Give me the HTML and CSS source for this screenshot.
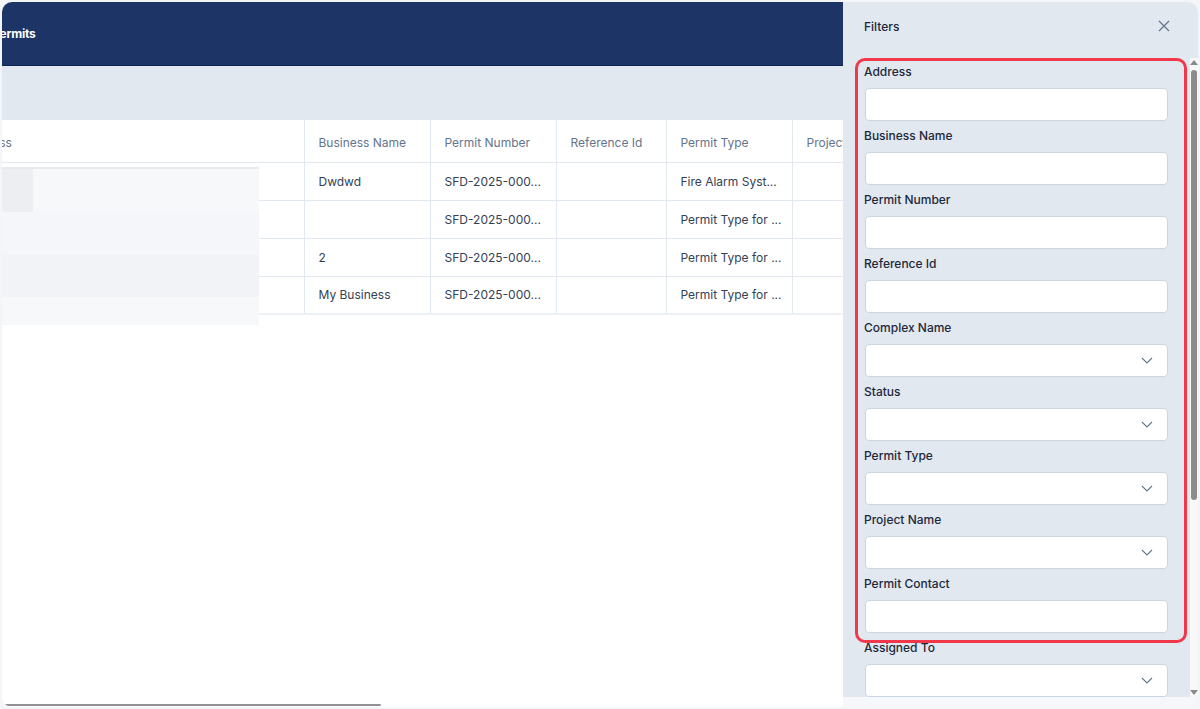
FILE: index.html
```html
<!DOCTYPE html>
<html lang="en">
<head>
    <meta charset="UTF-8">
    <meta name="viewport" content="width=device-width, initial-scale=1.0">
    <title>Permits</title>
    <link rel="stylesheet" href="styles.css">
</head>
<body>
    <div class="frame">
        <div class="main">
            <div class="main-scroll">
                <div class="topbar">
                    <span class="page-title">Permits</span>
                </div>
                <div class="toolbar"></div>
                <table class="permits">
                    <colgroup>
                        <col style="width:353px">
                        <col style="width:126px">
                        <col style="width:126px">
                        <col style="width:110px">
                        <col style="width:126px">
                        <col style="width:160px">
                    </colgroup>
                    <thead>
                        <tr>
                            <th>Address</th>
                            <th>Business Name</th>
                            <th>Permit Number</th>
                            <th>Reference Id</th>
                            <th>Permit Type</th>
                            <th>Project Name</th>
                        </tr>
                    </thead>
                    <tbody>
                        <tr>
                            <td></td>
                            <td>Dwdwd</td>
                            <td>SFD-2025-000...</td>
                            <td></td>
                            <td>Fire Alarm Syst...</td>
                            <td></td>
                        </tr>
                        <tr>
                            <td></td>
                            <td></td>
                            <td>SFD-2025-000...</td>
                            <td></td>
                            <td>Permit Type for ...</td>
                            <td></td>
                        </tr>
                        <tr>
                            <td></td>
                            <td>2</td>
                            <td>SFD-2025-000...</td>
                            <td></td>
                            <td>Permit Type for ...</td>
                            <td></td>
                        </tr>
                        <tr>
                            <td></td>
                            <td>My Business</td>
                            <td>SFD-2025-000...</td>
                            <td></td>
                            <td>Permit Type for ...</td>
                            <td></td>
                        </tr>
                    </tbody>
                </table>
            </div>
            <!-- redacted address column -->
            <div class="redact">
                <div class="redact-row r1"><span class="r1-edge"></span></div>
                <div class="redact-row r2"></div>
                <div class="redact-row r3"></div>
                <div class="redact-row r4"></div>
            </div>
            <div class="hscroll"><div class="hscroll-thumb"></div></div>
        </div>

        <aside class="filters">
            <div class="filters-head">
                <span class="filters-title">Filters</span>
                <svg class="close" width="12" height="12" viewBox="0 0 12 12">
                    <path d="M1 1 L11 11 M11 1 L1 11" stroke="#64748b" stroke-width="1.2" fill="none"/>
                </svg>
            </div>
            <div class="filters-body">
                <div class="filters-list">
                    <div class="field">
                        <label>Address</label>
                        <div class="input"></div>
                    </div>
                    <div class="field">
                        <label>Business Name</label>
                        <div class="input"></div>
                    </div>
                    <div class="field">
                        <label>Permit Number</label>
                        <div class="input"></div>
                    </div>
                    <div class="field">
                        <label>Reference Id</label>
                        <div class="input"></div>
                    </div>
                    <div class="field">
                        <label>Complex Name</label>
                        <div class="input select"><svg width="12" height="7" viewBox="0 0 12 7"><path d="M1 1 L6 6 L11 1" stroke="#64748b" stroke-width="1.1" fill="none"/></svg></div>
                    </div>
                    <div class="field">
                        <label>Status</label>
                        <div class="input select"><svg width="12" height="7" viewBox="0 0 12 7"><path d="M1 1 L6 6 L11 1" stroke="#64748b" stroke-width="1.1" fill="none"/></svg></div>
                    </div>
                    <div class="field">
                        <label>Permit Type</label>
                        <div class="input select"><svg width="12" height="7" viewBox="0 0 12 7"><path d="M1 1 L6 6 L11 1" stroke="#64748b" stroke-width="1.1" fill="none"/></svg></div>
                    </div>
                    <div class="field">
                        <label>Project Name</label>
                        <div class="input select"><svg width="12" height="7" viewBox="0 0 12 7"><path d="M1 1 L6 6 L11 1" stroke="#64748b" stroke-width="1.1" fill="none"/></svg></div>
                    </div>
                    <div class="field">
                        <label>Permit Contact</label>
                        <div class="input"></div>
                    </div>
                    <div class="field">
                        <label>Assigned To</label>
                        <div class="input select"><svg width="12" height="7" viewBox="0 0 12 7"><path d="M1 1 L6 6 L11 1" stroke="#64748b" stroke-width="1.1" fill="none"/></svg></div>
                    </div>
                </div>
                <div class="vscroll">
                    <span class="arrow up"></span>
                    <div class="vscroll-thumb"></div>
                    <span class="arrow down"></span>
                </div>
            </div>
            <div class="filters-foot"></div>
            <div class="highlight"></div>
        </aside>
    </div>
</body>
</html>
```

FILE: styles.css
```css
* {
    box-sizing: border-box;
}
body {
    margin: 0;
    background: #f4f5f9;
    font-family: Inter, "Noto Sans", sans-serif;
    overflow: hidden;
}
.frame {
    margin: 2px 0 0 2px;
    width: 1196px;
    height: 705px;
    border-radius: 10px;
    overflow: hidden;
    background: #fff;
    display: flex;
}

/* left side: permits list */
.main {
    width: 841px;
    position: relative;
    overflow: hidden;
    display: flex;
    flex-direction: column;
    background: #fff;
}
.main-scroll {
    flex: 1;
    margin-left: -51px;
}
.topbar {
    height: 64px;
    background: #1c3566;
    border-bottom: 1px solid #0f2250;
    display: flex;
    align-items: center;
    padding-left: 41px;
}
.page-title {
    color: #fff;
    font-weight: 700;
    font-size: 12px;
    letter-spacing: -0.2px;
}
.toolbar {
    height: 54px;
    background: #e2e8f0;
}
.permits {
    border-collapse: collapse;
    table-layout: fixed;
    width: 1001px;
    font-size: 12px;
}
.permits th,
.permits td {
    text-align: left;
    padding: 0 14px;
    border-right: 1px solid #e2e8f0;
    border-bottom: 1px solid #e2e8f0;
    white-space: nowrap;
    overflow: hidden;
}
.permits th {
    height: 42px;
    padding-top: 4px;
    font-weight: 400;
    color: #64748b;
}
.permits td {
    height: 38px;
    color: #334155;
}
.permits tbody tr:last-child td {
    border-bottom: 2px solid #edf0f5;
}

.redact {
    position: absolute;
    left: 0;
    top: 165px;
    width: 257px;
    height: 158px;
    display: flex;
    flex-direction: column;
    filter: blur(0.6px);
}
.redact-row {
    width: 100%;
}
.r1 {
    height: 45px;
    background: #f7f8fa;
    border-top: 2px solid #e6e9ee;
    display: flex;
}
.r1-edge {
    width: 31px;
    background: #eceef2;
}
.r2 {
    height: 43px;
    background: #f5f6f9;
}
.r3 {
    height: 42px;
    background: #f1f3f6;
}
.r4 {
    height: 28px;
    background: #f7f8fa;
}

.hscroll {
    height: 3px;
    padding-left: 1px;
}
.hscroll-thumb {
    width: 378px;
    height: 2px;
    background: #8f9198;
    border-radius: 1px;
}

/* right side: filter drawer */
.filters {
    width: 355px;
    background: #e2e8f0;
    position: relative;
    display: flex;
    flex-direction: column;
}
.filters-head {
    height: 56px;
    display: flex;
    align-items: center;
    justify-content: space-between;
    padding: 0 28px 8px 21px;
}
.filters-title {
    font-size: 12px;
    font-weight: 500;
    color: #1e293b;
}
.filters-body {
    height: 639px;
    display: flex;
}
.filters-list {
    flex: 1;
    overflow: hidden;
    padding: 6px 22px 0 21px;
}
.field label {
    display: block;
    height: 16px;
    line-height: 16px;
    font-size: 12px;
    font-weight: 500;
    color: #1e293b;
    margin-bottom: 8px;
}
.input {
    height: 33px;
    margin: 0 0 7px 1px;
    background: #fff;
    border: 1px solid #cbd5e1;
    border-radius: 4px;
}
.select {
    display: flex;
    align-items: center;
    justify-content: flex-end;
    padding-right: 14px;
}
.vscroll {
    width: 8px;
    background: #f8f8f8;
    display: flex;
    flex-direction: column;
    align-items: center;
    padding: 2px 0;
}
.arrow {
    width: 0;
    height: 0;
    border-left: 4px solid transparent;
    border-right: 4px solid transparent;
}
.arrow.up {
    border-bottom: 5px solid #8a8a8a;
}
.arrow.down {
    border-top: 5px solid #8a8a8a;
    margin-top: auto;
}
.vscroll-thumb {
    width: 6px;
    height: 430px;
    margin-top: 5px;
    background: #8c8c8c;
    border-radius: 3px;
}
.filters-foot {
    flex: 1;
    background: #f6f7fa;
}
.highlight {
    position: absolute;
    left: 12px;
    top: 56px;
    width: 332px;
    height: 585px;
    border: 3px solid #f0384a;
    border-radius: 10px;
    pointer-events: none;
}
```
